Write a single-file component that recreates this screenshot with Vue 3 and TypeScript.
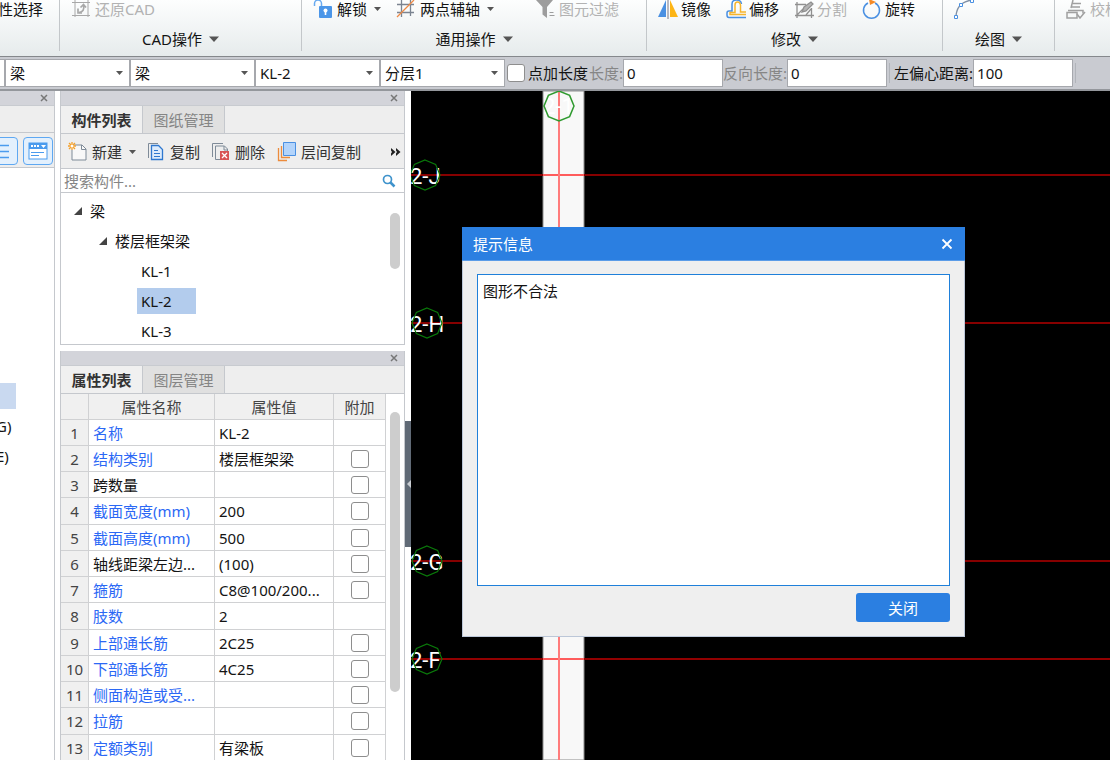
<script setup lang="ts">
import { ref } from 'vue'

interface Combo { id: string; label: string; value: string }
interface PropertyRow { name: string; value: string; linked: boolean; extra: boolean }
interface Axis { label: string; x: number; y: number; color: string }

const combos: Combo[] = [
  { id: 'category', label: '构件类型', value: '梁' },
  { id: 'kind', label: '构件', value: '梁' },
  { id: 'member', label: '名称', value: 'KL-2' },
  { id: 'layer', label: '分层', value: '分层1' },
]

const rows: PropertyRow[] = [
  { name: '名称', value: 'KL-2', linked: true, extra: false },
  { name: '结构类别', value: '楼层框架梁', linked: true, extra: true },
  { name: '跨数量', value: '', linked: false, extra: true },
  { name: '截面宽度(mm)', value: '200', linked: true, extra: true },
  { name: '截面高度(mm)', value: '500', linked: true, extra: true },
  { name: '轴线距梁左边...', value: '(100)', linked: false, extra: true },
  { name: '箍筋', value: 'C8@100/200...', linked: true, extra: true },
  { name: '肢数', value: '2', linked: true, extra: false },
  { name: '上部通长筋', value: '2C25', linked: true, extra: true },
  { name: '下部通长筋', value: '4C25', linked: true, extra: true },
  { name: '侧面构造或受...', value: '', linked: true, extra: true },
  { name: '拉筋', value: '', linked: true, extra: true },
  { name: '定额类别', value: '有梁板', linked: true, extra: true },
]

const axes: Axis[] = [
  { label: '2-J', x: 14, y: 84, color: '#860000' },
  { label: '2-H', x: 16, y: 232, color: '#860000' },
  { label: '2-G', x: 16, y: 470, color: '#860000' },
  { label: '2-F', x: 16, y: 568, color: '#920000' },
]

const members = ['KL-1', 'KL-2', 'KL-3']
const selected = ref('KL-2')
const dialogOpen = ref(true)
const message = ref('图形不合法')
const length = ref('0')
const reverseLength = ref('0')
const offset = ref('100')

const octagon = (cx: number, cy: number, r: number): string =>
  Array.from({ length: 8 }, (_, i) => {
    const a = (i * Math.PI) / 4
    return `${cx + r * Math.sin(a)},${cy - r * Math.cos(a)}`
  }).join(' ')
</script>

<template>
  <div class="app">
    <header class="ribbon">
      <section class="group group-select">
        <div class="tools"><button class="tool">性选择</button></div>
      </section>
      <section class="group group-cad">
        <div class="tools">
          <button class="tool" disabled>
            <svg class="ic" width="20" height="20" viewBox="0 0 20 20" fill="none" stroke="#a8a8a8">
              <path d="M4 1v17M17 1v17M1 3.500h18M1 16.500h18" />
              <path d="M8 13.500q6-1 4.500-7M9.500 8.500L12.500 5.500l2.500 3" stroke-width="1.700" />
              <path d="M7 9.500v4.500h4" stroke-width="1.700" />
            </svg>
            还原CAD
          </button>
        </div>
        <button class="caption">CAD操作<svg class="big-caret" width="10" height="6" viewBox="0 0 10 6"><path d="M0 0.500h10L5 6z" /></svg></button>
      </section>
      <section class="group group-common">
        <div class="tools">
          <button class="tool">
            <svg class="ic" width="20" height="20" viewBox="0 0 20 20">
              <path d="M1.500 7V4.500a3.500 3.500 0 0 1 7 0V8" fill="none" stroke="#68aaf0" stroke-width="1.500" />
              <rect x="6" y="7" width="13" height="12" rx="1" fill="#4b96e8" />
              <circle cx="12.500" cy="11.500" r="2" fill="#fff" /><path d="M11.700 11.500h1.600v4.500h-1.600z" fill="#fff" />
            </svg>
            解锁<svg class="caret" width="7" height="4" viewBox="0 0 7 4"><path d="M0 0h7L3.500 4z" /></svg>
          </button>
          <button class="tool axis-tool">
            <svg class="ic" width="20" height="20" viewBox="0 0 20 20" fill="none">
              <path d="M5.500 1v17M14.500 0v17M1 5.500h17M1 13.500h17" stroke="#7b8491" stroke-width="1.300" />
              <path d="M1 18L18 1" stroke="#ef8a45" stroke-width="1.300" />
            </svg>
            两点辅轴<svg class="caret" width="7" height="4" viewBox="0 0 7 4"><path d="M0 0h7L3.500 4z" /></svg>
          </button>
          <button class="tool filter-tool" disabled>
            <svg class="ic" width="20" height="20" viewBox="0 0 20 20" fill="#9d9d9d">
              <path d="M1 1h17l-6 7v11L7.500 15.500V8z" />
              <path d="M14.500 13h4v1h-4zM14.500 16h5v1h-5z" />
            </svg>
            图元过滤
          </button>
        </div>
        <button class="caption">通用操作<svg class="big-caret" width="10" height="6" viewBox="0 0 10 6"><path d="M0 0.500h10L5 6z" /></svg></button>
      </section>
      <section class="group group-edit">
        <div class="tools edit-tools">
          <button class="tool">
            <svg class="ic" width="20" height="20" viewBox="0 0 20 20">
              <path d="M8 1v17H0z" fill="#4a90e2" /><path d="M12 1v17h8z" fill="#fdb515" />
              <path d="M10 0v20" stroke="#778" />
            </svg>
            镜像
          </button>
          <button class="tool">
            <svg class="ic" width="20" height="20" viewBox="0 0 20 20" fill="none" stroke-width="1.500">
              <path d="M20 18.500H3Q1 18.500 1 16v-2q0-2 2-2h3V5q0-4 4.500-4t5 4" stroke="#4a90e2" />
              <path d="M20 15.500H4v-2h5V6q0-3 2.500-3T14.500 6v7H20" stroke="#f6b52e" />
            </svg>
            偏移
          </button>
          <button class="tool" disabled>
            <svg class="ic" width="20" height="20" viewBox="0 0 20 20" fill="none" stroke="#909090" stroke-width="1.300">
              <path d="M1 5.500h11M1 16.500h19M3 3v16M17.500 9v10M3 16l6-6" />
              <path d="M8 13l2-5 7-5 2 2-7 7z" fill="#b4b4b4" /><path d="M12 16l5-6" />
            </svg>
            分割
          </button>
          <button class="tool">
            <svg class="ic" width="20" height="20" viewBox="0 0 20 20" fill="none">
              <path d="M13 4a8 8 0 1 1-7 0" stroke="#4a90e2" stroke-width="1.500" />
              <path d="M7 0l7 3-6 3z" fill="#f58a27" />
            </svg>
            旋转
          </button>
        </div>
        <button class="caption">修改<svg class="big-caret" width="10" height="6" viewBox="0 0 10 6"><path d="M0 0.500h10L5 6z" /></svg></button>
      </section>
      <section class="group group-draw">
        <div class="tools">
          <button class="tool" aria-label="绘图">
            <svg class="ic" width="20" height="20" viewBox="0 0 20 20" fill="none">
              <path d="M2 17Q3 3 18 1" stroke="#8090a5" stroke-width="1.300" />
              <path d="M0.500 16.500h3v3h-3zM5.500 4.500h3v3h-3zM16.500 0.500h3v3h-3z" fill="#fff" stroke="#4a90e2" />
            </svg>
          </button>
        </div>
        <button class="caption">绘图<svg class="big-caret" width="10" height="6" viewBox="0 0 10 6"><path d="M0 0.500h10L5 6z" /></svg></button>
      </section>
      <section class="group group-check">
        <div class="tools">
          <button class="tool" disabled>
            <svg class="ic" width="20" height="20" viewBox="0 0 20 20" fill="none" stroke="#a0a0a0" stroke-width="1.500">
              <path d="M5 9L7 1M7 4.500h8M6 8h8M2 11.500h15v3M1 19h10V13.500H1z" /><path d="M11 15l3 4 5-6" />
            </svg>
            校核
          </button>
        </div>
      </section>
    </header>

    <div class="options">
      <span class="sliver"></span>
      <div v-for="c in combos" :key="c.id" class="combo">
        <select :id="c.id" :aria-label="c.label"><option>{{ c.value }}</option></select>
        <svg class="combo-caret" width="7" height="4" viewBox="0 0 7 4"><path d="M0 0h7L3.500 4z" /></svg>
      </div>
      <input id="point" class="check" type="checkbox" />
      <label class="point-label" for="point">点加长度</label>
      <label class="muted" for="len">长度:</label>
      <input id="len" v-model="length" class="field" type="text" />
      <label class="muted" for="rev">反向长度:</label>
      <input id="rev" v-model="reverseLength" class="field" type="text" />
      <span class="sep"></span>
      <label class="offset-label" for="off">左偏心距离:</label>
      <input id="off" v-model="offset" class="field" type="text" />
      <span class="sep"></span>
    </div>

    <main class="work">
      <aside class="nav">
        <div class="title"><button class="close" aria-label="关闭导航"><svg width="8" height="8" viewBox="0 0 8 8"><path d="M1 1l6 6M7 1L1 7" /></svg></button></div>
        <div class="nav-strip"></div>
        <div class="nav-modes">
          <button class="mode" aria-label="列表">
            <svg width="20" height="20" viewBox="0 0 20 20" stroke="#4a9bee" stroke-width="1.300"><path d="M0 4.500h16M0 10.500h16M0 16.500h16" /></svg>
          </button>
          <button class="mode" aria-label="面板">
            <svg width="20" height="20" viewBox="0 0 20 20">
              <rect x="1" y="2" width="18" height="16" fill="#fff" stroke="#4a9bee" /><path d="M1 2h18v6H1z" fill="#4a9bee" />
              <path d="M3 4h2v2H3zM6 4h2v2H6zM9 4h2v2H9zM13 4h5l-2.500 3z" fill="#fff" />
              <path d="M3 11.500h13M3 14.500h8" stroke="#4a9bee" />
            </svg>
          </button>
        </div>
        <div class="nav-list">
          <div class="nav-selected"></div>
          <div class="nav-item">G)</div>
          <div class="nav-item">E)</div>
        </div>
      </aside>

      <div class="docks">
        <section class="dock members">
          <div class="title"><button class="close" aria-label="关闭构件列表"><svg width="8" height="8" viewBox="0 0 8 8"><path d="M1 1l6 6M7 1L1 7" /></svg></button></div>
          <div class="tabs">
            <button class="tab active">构件列表</button>
            <button class="tab">图纸管理</button>
          </div>
          <div class="actions">
            <button class="action">
              <svg width="20" height="20" viewBox="0 0 20 20" fill="none">
                <path d="M5 3h9l4 4v11H4V8" fill="#f8f8f8" stroke="#7f8b98" /><path d="M13.500 3v4.500H18" stroke="#7f8b98" />
                <path d="M4 0v8M0 4h8M1 1l6 6M7 1L1 7" stroke="#f5a02a" stroke-width="1.300" /><circle cx="4" cy="4" r="1.500" fill="#fff" />
              </svg>
              新建<svg class="caret" width="7" height="4" viewBox="0 0 7 4"><path d="M0 0h7L3.500 4z" /></svg>
            </button>
            <button class="action copy">
              <svg width="20" height="20" viewBox="0 0 20 20" fill="none">
                <path d="M2.500 16V1.500H12" stroke="#7f8b98" />
                <path d="M5.500 3.500h7l4 4v10h-11z" fill="#dcebfc" stroke="#2f78cf" stroke-width="1.300" />
                <path d="M8 8.500h4M8 11.500h6M8 14.500h6" stroke="#2f78cf" />
              </svg>
              复制
            </button>
            <button class="action delete">
              <svg width="20" height="20" viewBox="0 0 20 20" fill="none">
                <path d="M1.500 15V1.500H12" stroke="#7f8b98" />
                <path d="M16.500 9V7l-3-3h-9v13.500H9" stroke="#7f8b98" /><path d="M13 4v4h3" stroke="#7f8b98" />
                <path d="M9 9h9v9H9z" fill="#d85555" /><path d="M11 11l5 5M16 11l-5 5" stroke="#fff" stroke-width="1.300" />
              </svg>
              删除
            </button>
            <button class="action layers">
              <svg width="20" height="20" viewBox="0 0 20 20" fill="none">
                <path d="M1.500 6v12.500H10M4.500 4v11.500H13" stroke="#ec8b3c" stroke-width="1.300" />
                <path d="M6.500 0.500h12v13h-12z" fill="#b3d4fb" stroke="#4a90e2" />
              </svg>
              层间复制
            </button>
            <button class="more" aria-label="更多"><svg width="10" height="8" viewBox="0 0 10 8"><path d="M0 0l4.500 4L0 8V5.500L1 4 0 2.500zM5 0l4.500 4L5 8V5.500L6 4 5 2.500z" fill="#222" /></svg></button>
          </div>
          <div class="search">
            <input type="text" aria-label="搜索构件" placeholder="搜索构件..." />
            <svg width="14" height="14" viewBox="0 0 14 14" fill="none" stroke="#3f93cc"><circle cx="5.500" cy="5.500" r="4" stroke-width="1.700" /><path d="M8.500 8.500l4 4" stroke-width="2.500" /></svg>
          </div>
          <div class="tree-area">
            <ul class="tree">
              <li class="node root"><svg class="twig" width="8" height="8" viewBox="0 0 8 8"><path d="M8 0v8H0z" /></svg>梁</li>
              <li class="node branch"><svg class="twig" width="8" height="8" viewBox="0 0 8 8"><path d="M8 0v8H0z" /></svg>楼层框架梁</li>
              <li v-for="m in members" :key="m" class="node leaf">
                <button class="leaf-name" :class="{ on: m === selected }" @click="selected = m">{{ m }}</button>
              </li>
            </ul>
            <div class="rail"><div class="thumb short"></div></div>
          </div>
        </section>

        <section class="dock properties">
          <div class="title"><button class="close" aria-label="关闭属性列表"><svg width="8" height="8" viewBox="0 0 8 8"><path d="M1 1l6 6M7 1L1 7" /></svg></button></div>
          <div class="tabs">
            <button class="tab active">属性列表</button>
            <button class="tab">图层管理</button>
          </div>
          <div class="table-area">
            <table>
              <colgroup><col class="c-no" /><col class="c-name" /><col class="c-value" /><col class="c-extra" /></colgroup>
              <thead>
                <tr><th></th><th>属性名称</th><th>属性值</th><th>附加</th></tr>
              </thead>
              <tbody>
                <tr v-for="(r, i) in rows" :key="r.name">
                  <th scope="row">{{ i + 1 }}</th>
                  <td :class="{ linked: r.linked }">{{ r.name }}</td>
                  <td>{{ r.value }}</td>
                  <td class="extra"><input v-if="r.extra" class="check" type="checkbox" :aria-label="r.name" /></td>
                </tr>
              </tbody>
            </table>
            <div class="rail"><div class="thumb long"></div></div>
          </div>
        </section>
      </div>

      <div class="splitter">
        <button class="handle" aria-label="收起"><svg width="4" height="8" viewBox="0 0 4 8"><path d="M4 0v8L0 4z" fill="#c9cdd2" /></svg></button>
      </div>

      <section class="canvas">
        <svg class="drawing" width="100%" height="100%">
          <rect x="132" y="0" width="41" height="100%" fill="#f8f8f8" stroke="#8d8d8d" />
          <template v-for="a in axes" :key="a.label">
            <rect x="0" :y="a.y - 1" width="100%" height="2" :fill="a.color" />
            <rect x="132" :y="a.y - 1" width="41" height="2" fill="#ff5c5c" />
          </template>
          <rect x="147" y="0" width="2" height="100%" fill="#ff7b7b" />
          <text class="axis" x="132" y="23">2-1</text>
          <polygon :points="octagon(148, 15, 15)" class="bubble light" />
          <template v-for="a in axes" :key="a.label">
            <text class="axis" x="-1" :y="a.y + 9">{{ a.label }}</text>
            <polygon :points="octagon(a.x, a.y, 15)" class="bubble" />
          </template>
        </svg>

        <div v-if="dialogOpen" class="dialog" role="dialog" aria-labelledby="dialog-title">
          <div class="dialog-head">
            <span id="dialog-title">提示信息</span>
            <button class="dialog-x" aria-label="关闭提示" @click="dialogOpen = false"><svg width="12" height="12" viewBox="0 0 12 12"><path d="M1.500 1.500l9 9M10.500 1.500l-9 9" stroke="#fff" stroke-width="1.800" /></svg></button>
          </div>
          <div class="dialog-body">
            <textarea v-model="message" aria-labelledby="dialog-title"></textarea>
            <button class="dismiss" @click="dialogOpen = false">关闭</button>
          </div>
        </div>
      </section>
    </main>
  </div>
</template>

<style>
body { margin: 0; }
</style>

<style scoped>
.app, .app * { box-sizing: border-box; }
.app {
  display: flex;
  flex-direction: column;
  height: 100vh;
  overflow: hidden;
  background: #fff;
  color: #141414;
  font: 15px/20px "Noto Sans", "Noto Sans CJK SC", sans-serif;
}
button, input, select, textarea { font: inherit; color: inherit; margin: 0; }
button { border: 0; padding: 0; background: none; white-space: nowrap; }
svg { display: block; flex: none; }
.caret, .big-caret, .combo-caret { fill: #555; }
.caret { margin-left: 3px; }

.ribbon {
  display: flex;
  flex: none;
  overflow: hidden;
  height: 57px;
  border-bottom: 1px solid #85888c;
  background: linear-gradient(#fdfefe, #e6ebec);
}
.group {
  display: flex;
  flex-direction: column;
  flex: none;
  gap: 10px;
  margin-top: -1px;
  height: 52px;
  border-right: 1px solid #c3c7ca;
}
.group-select { width: 60px; }
.group-cad { width: 242px; }
.group-common { width: 345px; }
.group-edit { width: 296px; }
.group-draw { width: 112px; }
.group-check { flex: 1; border: 0; }
.tools { display: flex; height: 20px; padding-left: 11px; }
.group-select .tools { padding-left: 0; margin-left: -2px; }
.edit-tools { gap: 15px; }
.tool { display: flex; align-items: center; gap: 4px; }
.edit-tools .tool { gap: 3px; }
.tool:disabled { color: #b2b2b2; }
.axis-tool { margin-left: 15px; }
.filter-tool { margin-left: 41px; }
.caption { display: flex; align-items: center; justify-content: center; gap: 7px; }

.options {
  display: flex;
  flex: none;
  align-items: center;
  height: 34px;
  padding-bottom: 1px;
  overflow: hidden;
  border-bottom: 2px solid #94979c;
  background: #c9cbd1;
  white-space: nowrap;
}
.options > * { flex: none; }
.sliver { width: 5px; height: 28px; border: 1px solid #a6a8ad; border-left: 0; background: #fff; }
.combo { display: grid; align-items: center; width: 125px; }
.combo > * { grid-area: 1 / 1; }
.combo select {
  appearance: none;
  width: 100%;
  height: 28px;
  padding: 0 4px;
  border: 1px solid #a6a8ad;
  border-radius: 0;
  background: #fff;
}
.combo-caret { justify-self: end; margin-right: 7px; pointer-events: none; }
.check {
  appearance: none;
  width: 18px;
  height: 18px;
  border: 1px solid #8e8e8e;
  border-radius: 3px;
  background: #fff;
}
.options .check { margin-left: 2px; }
.point-label { margin: 0 1px 0 3px; }
.muted { color: #868686; }
.field { width: 100px; height: 28px; padding: 0 3px; border: 1px solid #a6a8ad; border-radius: 0; background: #fff; }
.sep { width: 1px; height: 20px; margin-left: 2px; background: #b1b4ba; }
.offset-label { margin-left: 4px; }

.work { display: flex; flex: 1; min-height: 0; }
.title {
  display: flex;
  align-items: center;
  justify-content: flex-end;
  height: 15px;
  padding-right: 6px;
  border-bottom: 1px solid #c8cbd0;
  background: #d3d4da;
}
.close svg { fill: none; stroke: #777; stroke-width: 1.5; }

.nav { flex: none; width: 55px; border-right: 1px solid #c5c8cd; overflow: hidden; }
.nav-strip { height: 27px; border-bottom: 1px solid #c5c8cd; background: #eee; }
.nav-modes { display: flex; align-items: center; justify-content: flex-end; gap: 5px; height: 35px; padding: 1px 1px 0 0; border-bottom: 1px solid #c5c8cd; background: #eee; }
.mode { display: grid; flex: none; place-items: center; width: 30px; height: 28px; border: 1px solid #5ea8f2; border-radius: 4px; background: #e3f0fd; }
.nav-list { padding-top: 215px; }
.nav-selected { width: 16px; height: 26px; margin-bottom: 7px; background: #c9d9f0; }
.nav-item { height: 30px; margin-left: -4px; }

.docks { display: flex; flex-direction: column; flex: none; gap: 6px; width: 345px; margin-left: 5px; }
.dock { border: 1px solid #c5c8cd; border-top: 0; }
.members { flex: none; }
.properties { flex: 1; min-height: 0; overflow: hidden; border-bottom: 0; }
.tabs { display: flex; height: 28px; border-bottom: 1px solid #c5c8cd; background: #eee; }
.tab { width: 82px; border-right: 1px solid #c5c8cd; background: #e0e0e0; color: #858585; }
.tab.active { background: #f0f0f0; color: #333; font-weight: 700; }
.actions { display: flex; align-items: center; height: 35px; padding: 1px 0 0 7px; border-bottom: 1px solid #c5c8cd; background: #eee; color: #333; }
.action { display: flex; align-items: center; gap: 4px; }
.copy { margin-left: 10px; }
.delete { margin-left: 11px; }
.layers { margin-left: 12px; }
.more { margin-left: auto; margin-right: 3px; }
.search { display: flex; align-items: center; height: 24px; padding-right: 8px; border-bottom: 1px solid #c5c8cd; }
.search input { flex: 1; min-width: 0; height: 22px; padding: 0 3px; border: 0; background: none; }
.search input::placeholder { color: #858585; }
.tree-area { display: flex; height: 151px; }
.tree { flex: 1; margin: 0; padding: 3px 0 0; list-style: none; overflow: hidden; }
.node { display: flex; align-items: center; height: 30px; }
.root { padding-left: 13px; gap: 8px; }
.branch { padding-left: 38px; gap: 8px; }
.twig { fill: #444; }
.leaf { padding-left: 76px; }
.leaf-name { width: 59px; height: 26px; padding-left: 4px; text-align: left; }
.leaf-name.on { background: #b3cced; }
.rail { display: flex; justify-content: center; align-items: flex-start; flex: none; width: 18px; padding-top: 18px; }
.thumb { width: 10px; border-radius: 5px; background: #cdcdcd; }
.short { height: 56px; margin-top: 2px; }
.long { height: 280px; }

.table-area { display: flex; }
table { flex: 1; table-layout: fixed; border-collapse: separate; border-spacing: 0; }
.c-no { width: 28px; }
.c-name { width: 126px; }
.c-value { width: 119px; }
.c-extra { width: 52px; }
th, td { height: 26px; padding: 0 4px; border-right: 1px solid #d0d1d3; border-bottom: 1px solid #d0d1d3; font-weight: 400; text-align: left; white-space: nowrap; overflow: hidden; }
th { padding: 0; background: #f0f0f0; color: #444; text-align: center; }
tbody tr:nth-child(4n) > * { height: 27px; }
.linked { color: #2b68f5; }
td.extra { padding: 0; text-align: center; }
td.extra .check { display: block; margin: 0 auto; }

.splitter { display: flex; flex: none; width: 6px; padding-top: 330px; }
.handle { display: flex; align-items: center; justify-content: flex-end; width: 100%; height: 126px; background: #606a76; }

.canvas { position: relative; flex: 1; min-width: 0; overflow: hidden; background: #000; }
.axis { fill: #fff; font: 400 22px Roboto, "Noto Sans", sans-serif; }
.bubble { fill: none; stroke: #0a7a0a; stroke-width: 1.2; }
.bubble.light { stroke: #2f9a2f; stroke-width: 1.5; }

.dialog {
  position: absolute;
  top: 136px;
  left: 51px;
  width: 503px;
  border: 1px solid #bcc7d8;
  border-top: 0;
  background: #efefef;
}
.dialog-head { display: flex; align-items: center; justify-content: space-between; height: 34px; padding: 0 12px 0 11px; margin: 0 -1px; border-bottom: 1px solid #5b9ce8; background: #2b7fe1; color: #fff; }
.dialog-body { display: flex; flex-direction: column; align-items: flex-end; gap: 7px; padding: 13px 14px 14px; }
textarea { display: block; width: 100%; height: 312px; padding: 6px 5px; border: 1px solid #1f80da; border-radius: 0; outline: 0; resize: none; background: #fff; }
.dismiss { width: 94px; height: 29px; border-radius: 3px; background: #2b7fe1; color: #fff; }
</style>
